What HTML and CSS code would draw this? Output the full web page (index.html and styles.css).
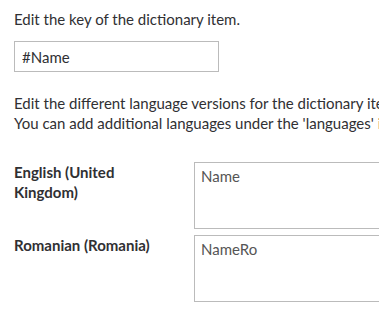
FILE: index.html
```html
<!DOCTYPE html>
<html lang="en">
<head>
  <meta charset="UTF-8">
  <title>Edit dictionary item</title>
  <meta name="viewport" content="width=device-width, initial-scale=1.0">
  <link rel="stylesheet" href="styles.css">
</head>
<body>
  <p class="intro">Edit the key of the dictionary item.</p>
  <input type="text" class="key-input" value="#Name">

  <p class="help">Edit the different language versions for the dictionary item.<br>
  You can add additional languages under the 'languages' in the menu on the left.</p>

  <div class="translations">
    <div class="row">
      <label class="lang" for="en">English (United Kingdom)</label>
      <textarea id="en" class="value">Name</textarea>
    </div>
    <div class="row">
      <label class="lang" for="ro">Romanian (Romania)</label>
      <textarea id="ro" class="value">NameRo</textarea>
    </div>
  </div>
</body>
</html>
```

FILE: styles.css
```css
html { overflow: hidden; }
body { font-family: Lato, "Open Sans", sans-serif; font-size: 15px; line-height: 20px; color: #303033; margin: 0; padding: 9px 14px; width: 700px; }
p { margin: 0; }
.intro { margin-bottom: 12px; }
.key-input { display: block; width: 205px; height: 31px; box-sizing: border-box; padding: 5px 7px; border: 1px solid #bbbbbb; font: inherit; color: #303033; outline: none; }
.help { margin-top: 21px; white-space: nowrap; }
.translations { margin-top: 29px; }
.row { display: flex; align-items: flex-start; margin-bottom: 6px; }
.lang { width: 180px; flex: none; font-weight: bold; padding-right: 20px; box-sizing: border-box; }
.value { width: 300px; height: 67px; box-sizing: border-box; padding: 3px 6px; border: 1px solid #bbbbbb; font: inherit; color: #555555; resize: none; outline: none; margin: 0; }
```
